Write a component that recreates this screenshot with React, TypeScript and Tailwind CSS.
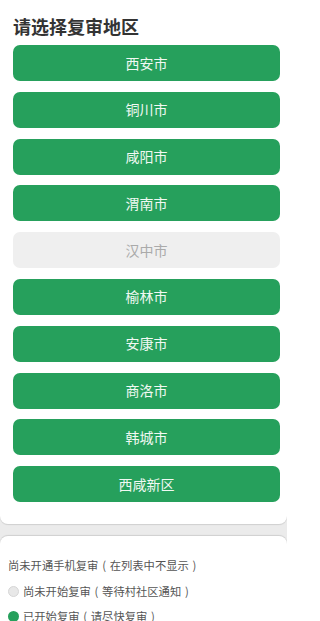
import React from 'react';

const cities = [
  { name: '西安市', on: true },
  { name: '铜川市', on: true },
  { name: '咸阳市', on: true },
  { name: '渭南市', on: true },
  { name: '汉中市', on: false },
  { name: '榆林市', on: true },
  { name: '安康市', on: true },
  { name: '商洛市', on: true },
  { name: '韩城市', on: true },
  { name: '西咸新区', on: true },
];

// full-width bracket that keeps its full em box
const P: React.FC<{ c: string }> = ({ c }) => (
  <span className="inline-block w-[1em] text-center">{c}</span>
);

const Note: React.FC<{ main: string; hint: string }> = ({ main, hint }) => (
  <span className="whitespace-nowrap">
    {main}
    <P c="(" />
    {hint}
    <P c=")" />
  </span>
);

const App: React.FC = () => {
  return (
    <div
      className="w-[287px] h-[621px] overflow-hidden bg-[#ebebeb]"
      style={{ fontFamily: '"Noto Sans CJK SC", "Noto Sans", sans-serif' }}
    >
      <div className="bg-white rounded-b-[8px] pl-[13px] pr-[7px] pt-[13px] pb-[22px] shadow-[0_1px_1px_rgba(0,0,0,0.12)]">
        <h1 className="text-[18px] leading-[26px] font-bold text-[#333]">请选择复审地区</h1>
        <div className="mt-[6px] flex flex-col gap-[10.8px]">
          {cities.map(c => (
            <div
              key={c.name}
              className={
                c.on
                  ? 'h-[36px] rounded-[7px] bg-[#26a05c] text-[#f1f9f3] text-[14px] flex items-center justify-center'
                  : 'h-[36px] rounded-[7px] bg-[#efefef] text-[#aaaaaa] text-[14px] flex items-center justify-center'
              }
            >
              {c.name}
            </div>
          ))}
        </div>
      </div>

      <div className="mt-[12px] bg-white rounded-t-[8px] px-[8px] pt-[17px] h-[200px] shadow-[0_-1px_1px_rgba(0,0,0,0.12)] text-[11.3px] text-[#555]">
        <div className="h-[25.5px] flex items-center">
          <Note main="尚未开通手机复审" hint="在列表中不显示" />
        </div>
        <div className="h-[25.5px] flex items-center gap-[4px]">
          <span className="w-[11px] h-[11px] rounded-full bg-[#e8e8e8] border border-[#d6d6d6]" />
          <Note main="尚未开始复审" hint="等待村社区通知" />
        </div>
        <div className="h-[25.5px] flex items-center gap-[4px]">
          <span className="w-[11px] h-[11px] rounded-full bg-[#26a05c]" />
          <Note main="已开始复审" hint="请尽快复审" />
        </div>
      </div>
    </div>
  );
};

export default App;
